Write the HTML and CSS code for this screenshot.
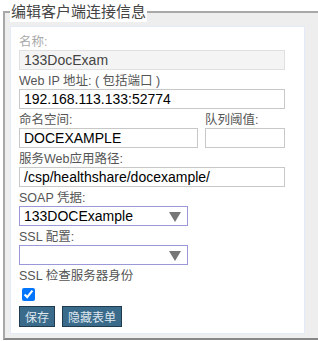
FILE: index.html
```html
<!DOCTYPE html>
<html lang="zh">
<head>
    <meta charset="UTF-8">
    <title>编辑客户端连接信息</title>
    <link rel="stylesheet" href="styles.css">
</head>
<body>
    <fieldset class="edit-box">
        <legend>编辑客户端连接信息</legend>
        <div class="edit-form">
            <div class="field">
                <label class="disabled">名称:</label>
                <input type="text" class="text-in wide" value="133DocExam" disabled>
            </div>
            <div class="field">
                <label>Web IP 地址: ( 包括端口 )</label>
                <input type="text" class="text-in wide" value="192.168.113.133:52774">
            </div>
            <div class="field-row">
                <div class="field">
                    <label>命名空间:</label>
                    <input type="text" class="text-in ns" value="DOCEXAMPLE">
                </div>
                <div class="field">
                    <label>队列阈值:</label>
                    <input type="text" class="text-in small" value="">
                </div>
            </div>
            <div class="field">
                <label>服务Web应用路径:</label>
                <input type="text" class="text-in wide" value="/csp/healthshare/docexample/">
            </div>
            <div class="field">
                <label>SOAP 凭据:</label>
                <div class="select-box"><span>133DOCExample</span><i class="arrow"></i></div>
            </div>
            <div class="field">
                <label>SSL 配置:</label>
                <div class="select-box"><span></span><i class="arrow"></i></div>
            </div>
            <div class="field">
                <label>SSL 检查服务器身份</label>
                <input type="checkbox" class="check" checked>
            </div>
            <div class="buttons">
                <button class="btn">保存</button>
                <button class="btn">隐藏表单</button>
            </div>
        </div>
    </fieldset>
</body>
</html>
```

FILE: styles.css
```css
body {
    margin: 0;
    padding: 2px 0 0 3px;
    font-family: "Liberation Sans", Arial, "Noto Sans CJK SC", sans-serif;
    background: #fff;
    overflow: hidden;
}

.edit-box {
    width: 330px;
    margin: 0;
    padding: 4px 0 4px 5px;
    border: 2px solid #a8a8a8;
    border-bottom-color: #888;
    background: #eeeeee;
    box-sizing: border-box;
}

.edit-box legend {
    font-size: 15px;
    line-height: 20px;
    color: #444;
    padding: 0 1px;
    margin: 0;
    background: #fff;
}

.edit-form {
    width: 295px;
    box-sizing: border-box;
    background: #fff;
    border: 1px solid #e4ebf8;
    padding: 8px 0 6px 8px;
}

.field label {
    display: block;
    font-size: 12.5px;
    color: #555;
    line-height: 15px;
}

.field label.disabled {
    color: #aaa;
}

.field {
    margin-bottom: 4px;
}

.field-row {
    display: flex;
    gap: 7px;
}

.text-in {
    display: block;
    box-sizing: border-box;
    height: 20px;
    margin: 0;
    padding: 0 4px;
    border: 1px solid #c8c8c8;
    font-family: inherit;
    font-size: 14px;
    color: #000;
    background: #fff;
}

.text-in:disabled {
    background: #f4f4f4;
    border-color: #e0e0e0;
    color: #444;
}

.wide {
    width: 266px;
}

.ns {
    width: 179px;
}

.small {
    width: 80px;
}

.select-box {
    position: relative;
    width: 169px;
    height: 20px;
    box-sizing: border-box;
    border: 1px solid #9a98d8;
    font-size: 14px;
    line-height: 18px;
    padding-left: 4px;
    color: #000;
}

.arrow {
    position: absolute;
    right: 6px;
    top: 5px;
    width: 0;
    height: 0;
    border-left: 6px solid transparent;
    border-right: 6px solid transparent;
    border-top: 10px solid #777;
}

.check {
    display: block;
    margin: 4px 0 0 3px;
    width: 13px;
    height: 13px;
}

.buttons {
    display: flex;
    gap: 7px;
    margin-top: 5px;
}

.btn {
    height: 21px;
    padding: 0 5px;
    border: 1px solid #1f3b4d;
    background: #3a6b8b;
    color: #dde6ee;
    font-family: inherit;
    font-size: 12px;
}
```
